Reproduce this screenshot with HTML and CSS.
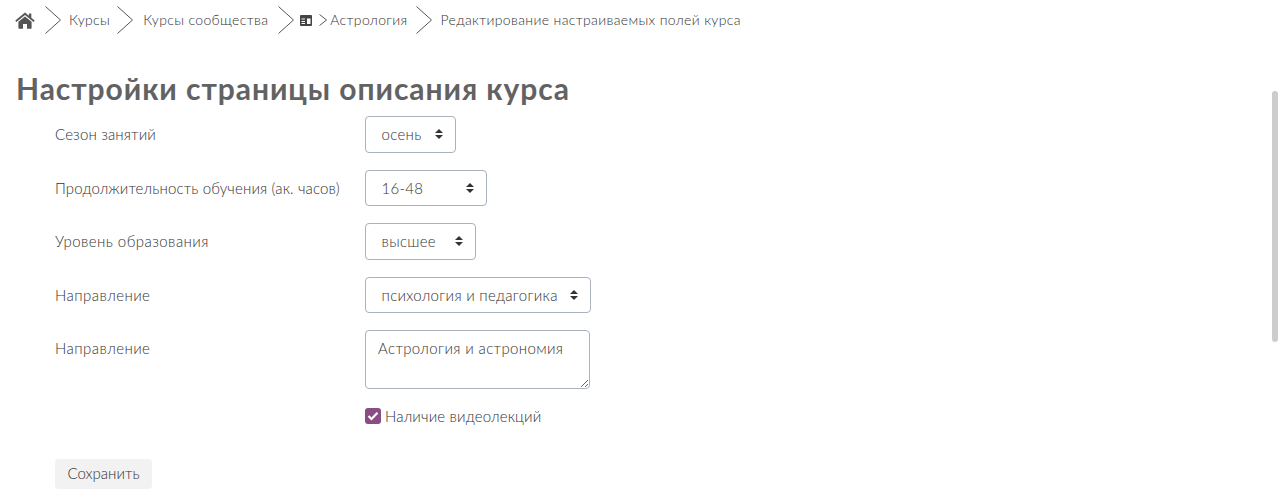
FILE: index.html
```html
<!DOCTYPE html>
<html lang="ru">
<head>
<meta charset="utf-8">
<title>Настройки страницы описания курса</title>
<link rel="stylesheet" href="styles.css">
</head>
<body>
<nav class="crumbs">
  <a class="home" href="#" aria-label="Главная"><svg width="20" height="17" viewBox="0 0 20 17"><path fill="#555" d="M10 0.6 0.3 8.6l1.1 1.3L10 2.9l8.6 7 1.1-1.3-3.4-2.8V1.5h-2.4v2.2zM10 4.4 3.4 9.8V16c0 .4.3.7.7.7h3.9v-4.6h4V16.700h3.900c.4 0 .7-.3.7-.7V9.800z"/></svg></a>
  <svg class="sep" width="16" height="28" viewBox="0 0 16 28"><path d="M.5.5 15.500 14 .5 27.500" fill="none" stroke="#555" stroke-width="1"/></svg>
  <a class="crumb c1" href="#">Курсы</a>
  <svg class="sep" width="16" height="28" viewBox="0 0 16 28"><path d="M.5.5 15.500 14 .5 27.500" fill="none" stroke="#555" stroke-width="1"/></svg>
  <a class="crumb c2" href="#">Курсы сообщества</a>
  <svg class="sep s3" width="16" height="28" viewBox="0 0 16 28"><path d="M.5.5 15.500 14 .5 27.500" fill="none" stroke="#555" stroke-width="1"/></svg>
  <svg class="tbl" width="12" height="11" viewBox="0 0 12 11"><path fill="#444" fill-rule="evenodd" d="M1 0h10a1 1 0 0 1 1 1v9a1 1 0 0 1-1 1H1a1 1 0 0 1-1-1V1a1 1 0 0 1 1-1zM1.500 3.500v1h3.500v-1zM1.500 6v1h3.500V6zM1.500 8v1h3.500V8zM7 3.500V9h3.500V3.500z"/></svg>
  <svg class="mini" width="8" height="12" viewBox="0 0 8 12"><path d="M.5.5 7.500 6 .5 11.500" fill="none" stroke="#555" stroke-width="1"/></svg>
  <a class="crumb c3" href="#">Астрология</a>
  <svg class="sep" width="16" height="28" viewBox="0 0 16 28"><path d="M.5.5 15.500 14 .5 27.500" fill="none" stroke="#555" stroke-width="1"/></svg>
  <span class="crumb c4">Редактирование настраиваемых полей курса</span>
</nav>
<h1 class="title">Настройки страницы описания курса</h1>
<form class="form">
  <div class="row">
    <label class="lbl" for="f1">Сезон занятий</label>
    <select class="sel w1" id="f1"><option>осень</option></select>
  </div>
  <div class="row">
    <label class="lbl" for="f2">Продолжительность обучения (ак. часов)</label>
    <select class="sel w2" id="f2"><option>16-48</option></select>
  </div>
  <div class="row">
    <label class="lbl wide" for="f3">Уровень образования</label>
    <select class="sel w3" id="f3"><option>высшее</option></select>
  </div>
  <div class="row">
    <label class="lbl wide" for="f4">Направление</label>
    <select class="sel w4" id="f4"><option>психология и педагогика</option></select>
  </div>
  <div class="row row-area">
    <label class="lbl wide" for="f5">Направление</label>
    <textarea class="area" id="f5">Астрология и астрономия</textarea>
  </div>
  <div class="row row-check">
    <span class="lbl"></span>
    <label class="check">
      <span class="box"><svg width="12" height="10" viewBox="0 0 12 10"><path d="M1.500 5 4.500 8 10.500 1.800" fill="none" stroke="#fff" stroke-width="2.200"/></svg></span>
      Наличие видеолекций
    </label>
  </div>
  <button class="save" type="button">Сохранить</button>
</form>
<div class="thumb"></div>
</body>
</html>
```

FILE: styles.css
```css
html, body {
  margin: 0;
  padding: 0;
  height: 499px;
  overflow: hidden;
  background: #fff;
}
body {
  font-family: "Lato", "Liberation Sans", sans-serif;
  font-size: 15px;
  font-weight: 300;
  color: #333;
  position: relative;
}
a { color: inherit; text-decoration: none; }
.crumbs {
  display: flex;
  align-items: center;
  height: 40px;
  padding-left: 15px;
  font-size: 14px;
  letter-spacing: .35px;
}
.home { display: flex; margin-right: 10px; }
.sep { flex: none; }
.crumb { white-space: nowrap; position: relative; top: -1px; }
.c1 { margin: 0 7px 0 8px; }
.c2 { margin: 0 10px; }
.s3 { margin-right: 6px; }
.tbl { margin-right: 7px; }
.mini { margin-right: 3px; }
.c3 { margin-right: 8px; }
.c4 { margin-left: 9px; }
.title {
  margin: 28px 0 0 16px;
  font-size: 30px;
  line-height: 40px;
  font-weight: 700;
  letter-spacing: .94px;
  color: #626262;
}
.form { margin-top: 8px; padding-left: 55px; }
.row {
  display: flex;
  align-items: flex-start;
  margin-bottom: 17px;
}
.lbl {
  flex: none;
  width: 310px;
  line-height: 36px;
  letter-spacing: .14px;
}
.wide { letter-spacing: .44px; }
.sel {
  appearance: none;
  -webkit-appearance: none;
  display: block;
  height: 36.500px;
  box-sizing: border-box;
  padding: 0 15.500px;
  border: 1px solid #aab2bd;
  border-radius: 4px;
  background: #fff url("data:image/svg+xml,%3Csvg xmlns='http://www.w3.org/2000/svg' width='8' height='10'%3E%3Cpath fill='%23333' d='M4 0l4 4H0zM4 10L0 6h8z'/%3E%3C/svg%3E") no-repeat right 12px center;
  font: inherit;
  letter-spacing: .3px;
  color: inherit;
}
.w1 { width: 91px; }
.w2 { width: 122px; }
.w3 { width: 111px; }
.w4 { width: 226px; }
.area {
  display: block;
  width: 225px;
  height: 59px;
  box-sizing: border-box;
  padding: 5px 12px;
  border: 1px solid #aab2bd;
  border-radius: 4px;
  font: inherit;
  letter-spacing: .37px;
  line-height: 24px;
  color: inherit;
}
.row-area { margin-bottom: 14px; }
.row-check { margin-bottom: 31px; height: 25px; align-items: center; }
.row-check .lbl { line-height: 1; }
.check { display: flex; align-items: center; gap: 4px; letter-spacing: .16px; }
.box {
  display: flex;
  align-items: center;
  justify-content: center;
  width: 16px;
  height: 16px;
  border-radius: 3px;
  background: #8a4c84;
}
.save {
  display: block;
  width: 97px;
  height: 30px;
  padding: 0 0 2px;
  border: 0;
  border-radius: 4px;
  background: #f2f2f2;
  font: inherit;
  color: inherit;
}
.thumb {
  position: absolute;
  left: 1272px;
  top: 91px;
  width: 6px;
  height: 251px;
  border-radius: 3px;
  background: #cdcdcd;
}
```
